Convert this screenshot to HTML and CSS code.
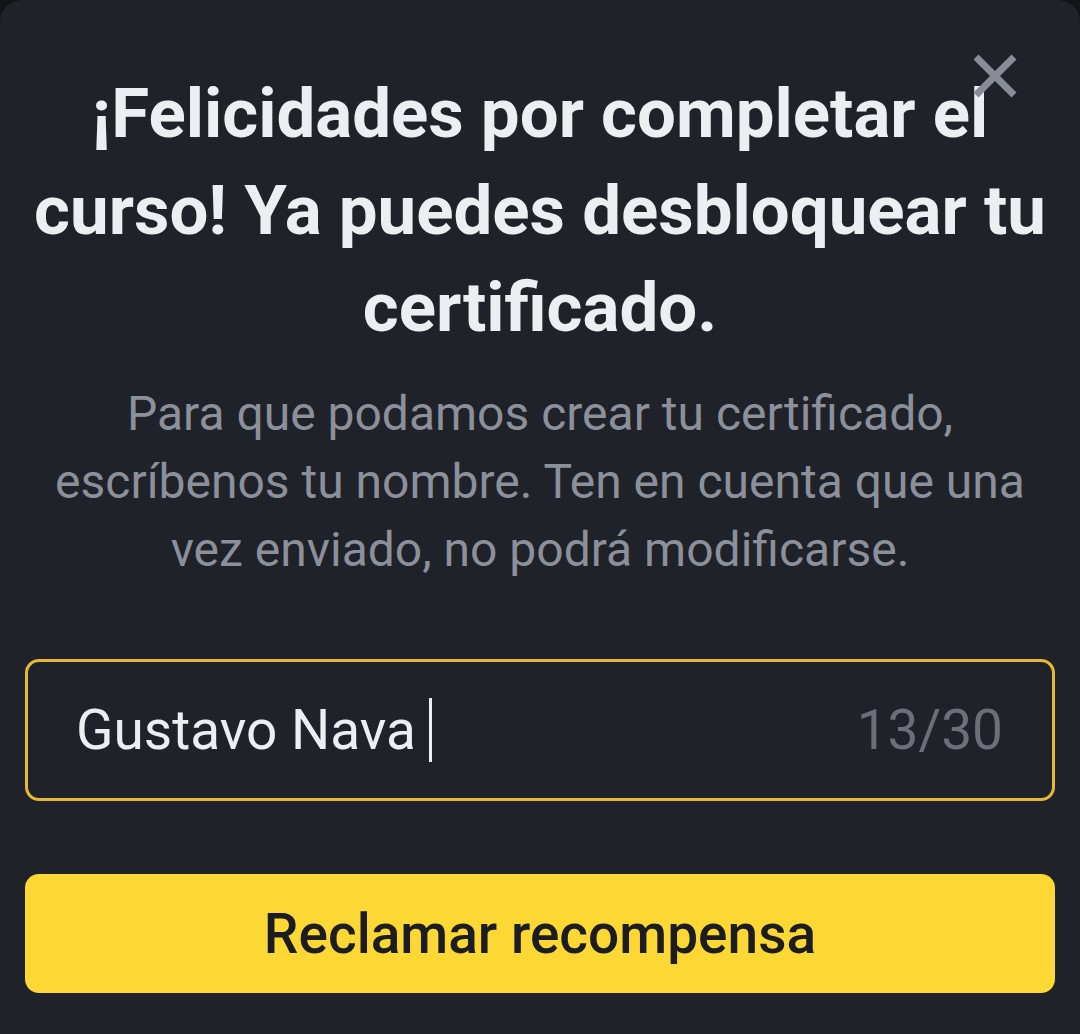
FILE: index.html
```html
<!DOCTYPE html>
<html lang="es">
<head>
  <meta charset="UTF-8" />
  <meta name="viewport" content="width=device-width, initial-scale=1" />
  <title>Certificado</title>
  <link rel="stylesheet" href="styles.css">
</head>
<body>
  <div class="sheet">
    <button class="cerrar" aria-label="Cerrar">
      <svg viewBox="0 0 44 44" width="44" height="44">
        <path d="M3 3 L41 41 M41 3 L3 41" stroke="#878c96" stroke-width="7" fill="none" />
      </svg>
    </button>

    <h1 class="titulo">¡Felicidades por completar el curso! Ya puedes desbloquear tu certificado.</h1>

    <p class="texto">Para que podamos crear tu certificado, escríbenos tu nombre. Ten en cuenta que una vez enviado, no podrá modificarse.</p>

    <div class="campo">
      <span class="valor">Gustavo Nava </span><span class="cursor"></span>
      <span class="contador">13/30</span>
    </div>

    <button class="boton">Reclamar recompensa</button>
  </div>
</body>
</html>
```

FILE: styles.css
```css
* {
  box-sizing: border-box;
}

html, body {
  margin: 0;
  padding: 0;
  background: #121417;
  font-family: Roboto, "Noto Sans", sans-serif;
}

.sheet {
  position: relative;
  height: 1034px;
  background: #1f2228;
  border-radius: 22px 22px 0 0;
  padding: 65px 25px 0;
  display: flex;
  flex-direction: column;
}

.cerrar {
  position: absolute;
  top: 54px;
  right: 63px;
  padding: 0;
  border: none;
  background: none;
  line-height: 0;
}

.titulo {
  margin: 0;
  color: #eceef2;
  font-size: 69px;
  font-weight: 700;
  line-height: 97px;
  text-align: center;
}

.texto {
  margin: 24px 0 0;
  color: #8b909a;
  font-size: 48px;
  line-height: 68px;
  text-align: center;
}

.campo {
  margin-top: 75px;
  height: 142px;
  border: 3px solid #e5b937;
  border-radius: 14px;
  display: flex;
  align-items: center;
  padding: 0 49px 0 48px;
}

.valor {
  color: #eceef2;
  font-size: 55px;
  white-space: pre;
}

.cursor {
  width: 3px;
  height: 64px;
  background: #eceef2;
}

.contador {
  margin-left: auto;
  color: #6a6f78;
  font-size: 55px;
}

.boton {
  margin-top: 73px;
  height: 119px;
  border: none;
  border-radius: 14px;
  background: #fdd835;
  color: #1c1d20;
  font-family: Roboto, "Noto Sans", sans-serif;
  font-size: 55px;
  font-weight: 500;
}
```
